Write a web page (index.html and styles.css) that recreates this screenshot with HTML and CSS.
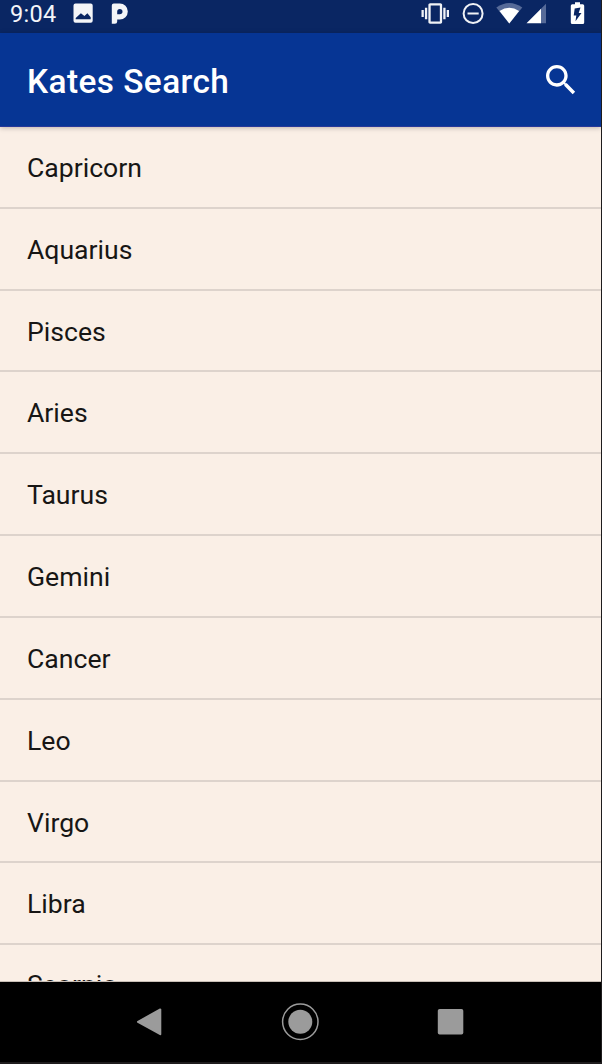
FILE: index.html
```html
<!DOCTYPE html>
<html lang="en">
<head>
<meta charset="utf-8">
<title>Kates Search</title>
<link rel="stylesheet" href="styles.css">
</head>
<body>
<div class="phone">
  <div class="status-bar">
    <span class="clock">9:04</span>
    <svg class="status-left" width="58" height="33" viewBox="72 0 58 33">
      <path fill="#f4f5f8" fill-rule="evenodd" d="M75.500 3.500h15.200a2 2 0 0 1 2 2v15.200a2 2 0 0 1-2 2H75.500a2 2 0 0 1-2-2V5.500a2 2 0 0 1 2-2zM75.700 19.200h15v-2l-3.300-4-3 2.800-3.500-2.800-5.200 4.700z"/>
      <path fill="#f4f5f8" fill-rule="evenodd" d="M113.800 3.500h6a8 8 0 0 1 0 16h-2.600v2q0 2.300-2.300 2.300h-3.100V5.500a2 2 0 0 1 2-2zM119.800 8.900a2.600 2.600 0 0 0-2.600 2.600v2.800h2.600a2.700 2.700 0 0 0 0-5.400z"/>
    </svg>
    <svg class="status-right" width="170" height="33" viewBox="418 0 170 33">
      <path fill="#f0f2f6" transform="translate(421.500 -.3) scale(1.146)" d="M0 15h2V9H0v6zm3 2h2V7H3v10zm19-8v6h2V9h-2zm-3 8h2V7h-2v10zM16.500 3h-9C6.670 3 6 3.670 6 4.500v15c0 .83.67 1.500 1.500 1.500h9c.83 0 1.500-.67 1.500-1.500v-15c0-.83-.67-1.500-1.500-1.500zM16 19H8V5h8v14z"/>
      <circle cx="473.100" cy="13.500" r="9.500" fill="none" stroke="#f0f2f6" stroke-width="2"/>
      <path d="M467.500 13.500h11.200" stroke="#f0f2f6" stroke-width="2"/>
      <path fill="#566a98" d="M496.300 7.500Q509.300-1.500 522.300 7.500L509.300 23.500z"/>
      <path fill="#fff" d="M499.500 11Q509.300 4.300 519.100 11L509.300 23.500z"/>
      <path fill="#566a98" d="M546 3.800V23.300h-6V9.800z"/>
      <path fill="#fff" d="M526.500 23.300L541 8.800v14.500z"/>
      <path fill="#fff" fill-rule="evenodd" d="M575 2.200h5v2h2.700q1.500 0 1.500 1.500v16.800q0 1.500-1.500 1.500h-10.400q-1.500 0-1.500-1.500V5.700q0-1.500 1.500-1.500h2.700zM580.500 7.500l-5.800 1-1 7h2.600l-.8 5.800 6-8.300h-2.800z"/>
    </svg>
  </div>
  <header class="app-bar">
    <h1 class="title">Kates Search</h1>
    <svg class="search" width="40" height="40" viewBox="0 0 24 24"><path fill="#fff" d="M15.500 14h-.79l-.28-.27C15.410 12.590 16 11.110 16 9.500 16 5.910 13.090 3 9.500 3S3 5.910 3 9.500 5.910 16 9.500 16c1.610 0 3.090-.59 4.230-1.570l.27.28v.79l5 4.990L20.490 19l-4.990-5zm-6 0C7.010 14 5 11.990 5 9.500S7.010 5 9.500 5 14 7.010 14 9.500 11.990 14 9.500 14z"/></svg>
  </header>
  <ul class="list">
    <li class="item">Capricorn</li>
    <li class="item">Aquarius</li>
    <li class="item">Pisces</li>
    <li class="item">Aries</li>
    <li class="item">Taurus</li>
    <li class="item">Gemini</li>
    <li class="item">Cancer</li>
    <li class="item">Leo</li>
    <li class="item">Virgo</li>
    <li class="item">Libra</li>
    <li class="item">Scorpio</li>
  </ul>
  <nav class="nav-bar">
    <svg width="40" height="40" viewBox="0 0 40 40"><path fill="#9b9b9b" stroke="#9b9b9b" stroke-width="2" stroke-linejoin="round" d="M8 19.800L30.300 7.500V32.200z"/></svg>
    <svg width="40" height="40" viewBox="0 0 40 40"><circle cx="20.300" cy="19.800" r="17.700" fill="none" stroke="#9b9b9b" stroke-width="1.500"/><circle cx="20.300" cy="19.800" r="12" fill="#9b9b9b"/></svg>
    <svg width="40" height="40" viewBox="0 0 40 40"><rect x="7.800" y="7" width="25.500" height="25.500" rx="1.800" fill="#9b9b9b"/></svg>
  </nav>
</div>
</body>
</html>
```
FILE: styles.css
```css
* { box-sizing: border-box; }
body {
  margin: 0;
  background: #1e1c1d;
  font-family: Roboto, "Liberation Sans", sans-serif;
}
svg { display: block; flex: none; }
.phone {
  width: 601px;
  height: 1062px;
  display: flex;
  flex-direction: column;
  overflow: hidden;
}
.status-bar {
  height: 33px;
  flex: none;
  display: flex;
  background: #0a2663;
}
.clock {
  width: 72px;
  padding-left: 10px;
  color: #f4f5f8;
  font-size: 23.500px;
  letter-spacing: .3px;
  line-height: 28px;
}
.status-right { margin: 0 13px 0 auto; }
.app-bar {
  height: 94px;
  flex: none;
  display: flex;
  align-items: center;
  justify-content: space-between;
  padding: 0 20px 0 27px;
  background: #063594;
  border-bottom: 1px solid #26389a;
  box-shadow: 0 1px 5px rgba(0, 0, 0, .25);
  z-index: 1;
}
.title {
  margin: 0;
  padding-top: 5px;
  color: #fff;
  font-size: 33.400px;
  letter-spacing: .43px;
  line-height: 40px;
  font-weight: 500;
}
.list {
  flex: 1;
  min-height: 0;
  margin: 0;
  padding: 0;
  overflow: hidden;
  list-style: none;
  background: #faefe6;
  border-bottom: 1px solid #c8beb6;
}
.item {
  height: 81.820px;
  padding-left: 27px;
  border-bottom: 2px solid #ddd3cc;
  color: #171615;
  font-size: 26.600px;
  line-height: 81.400px;
}
.item:last-child { line-height: 80px; }
.nav-bar {
  height: 80px;
  flex: none;
  display: flex;
  justify-content: center;
  gap: 110px;
  padding: 20px 2px 0 0;
  background: #000;
}
```
